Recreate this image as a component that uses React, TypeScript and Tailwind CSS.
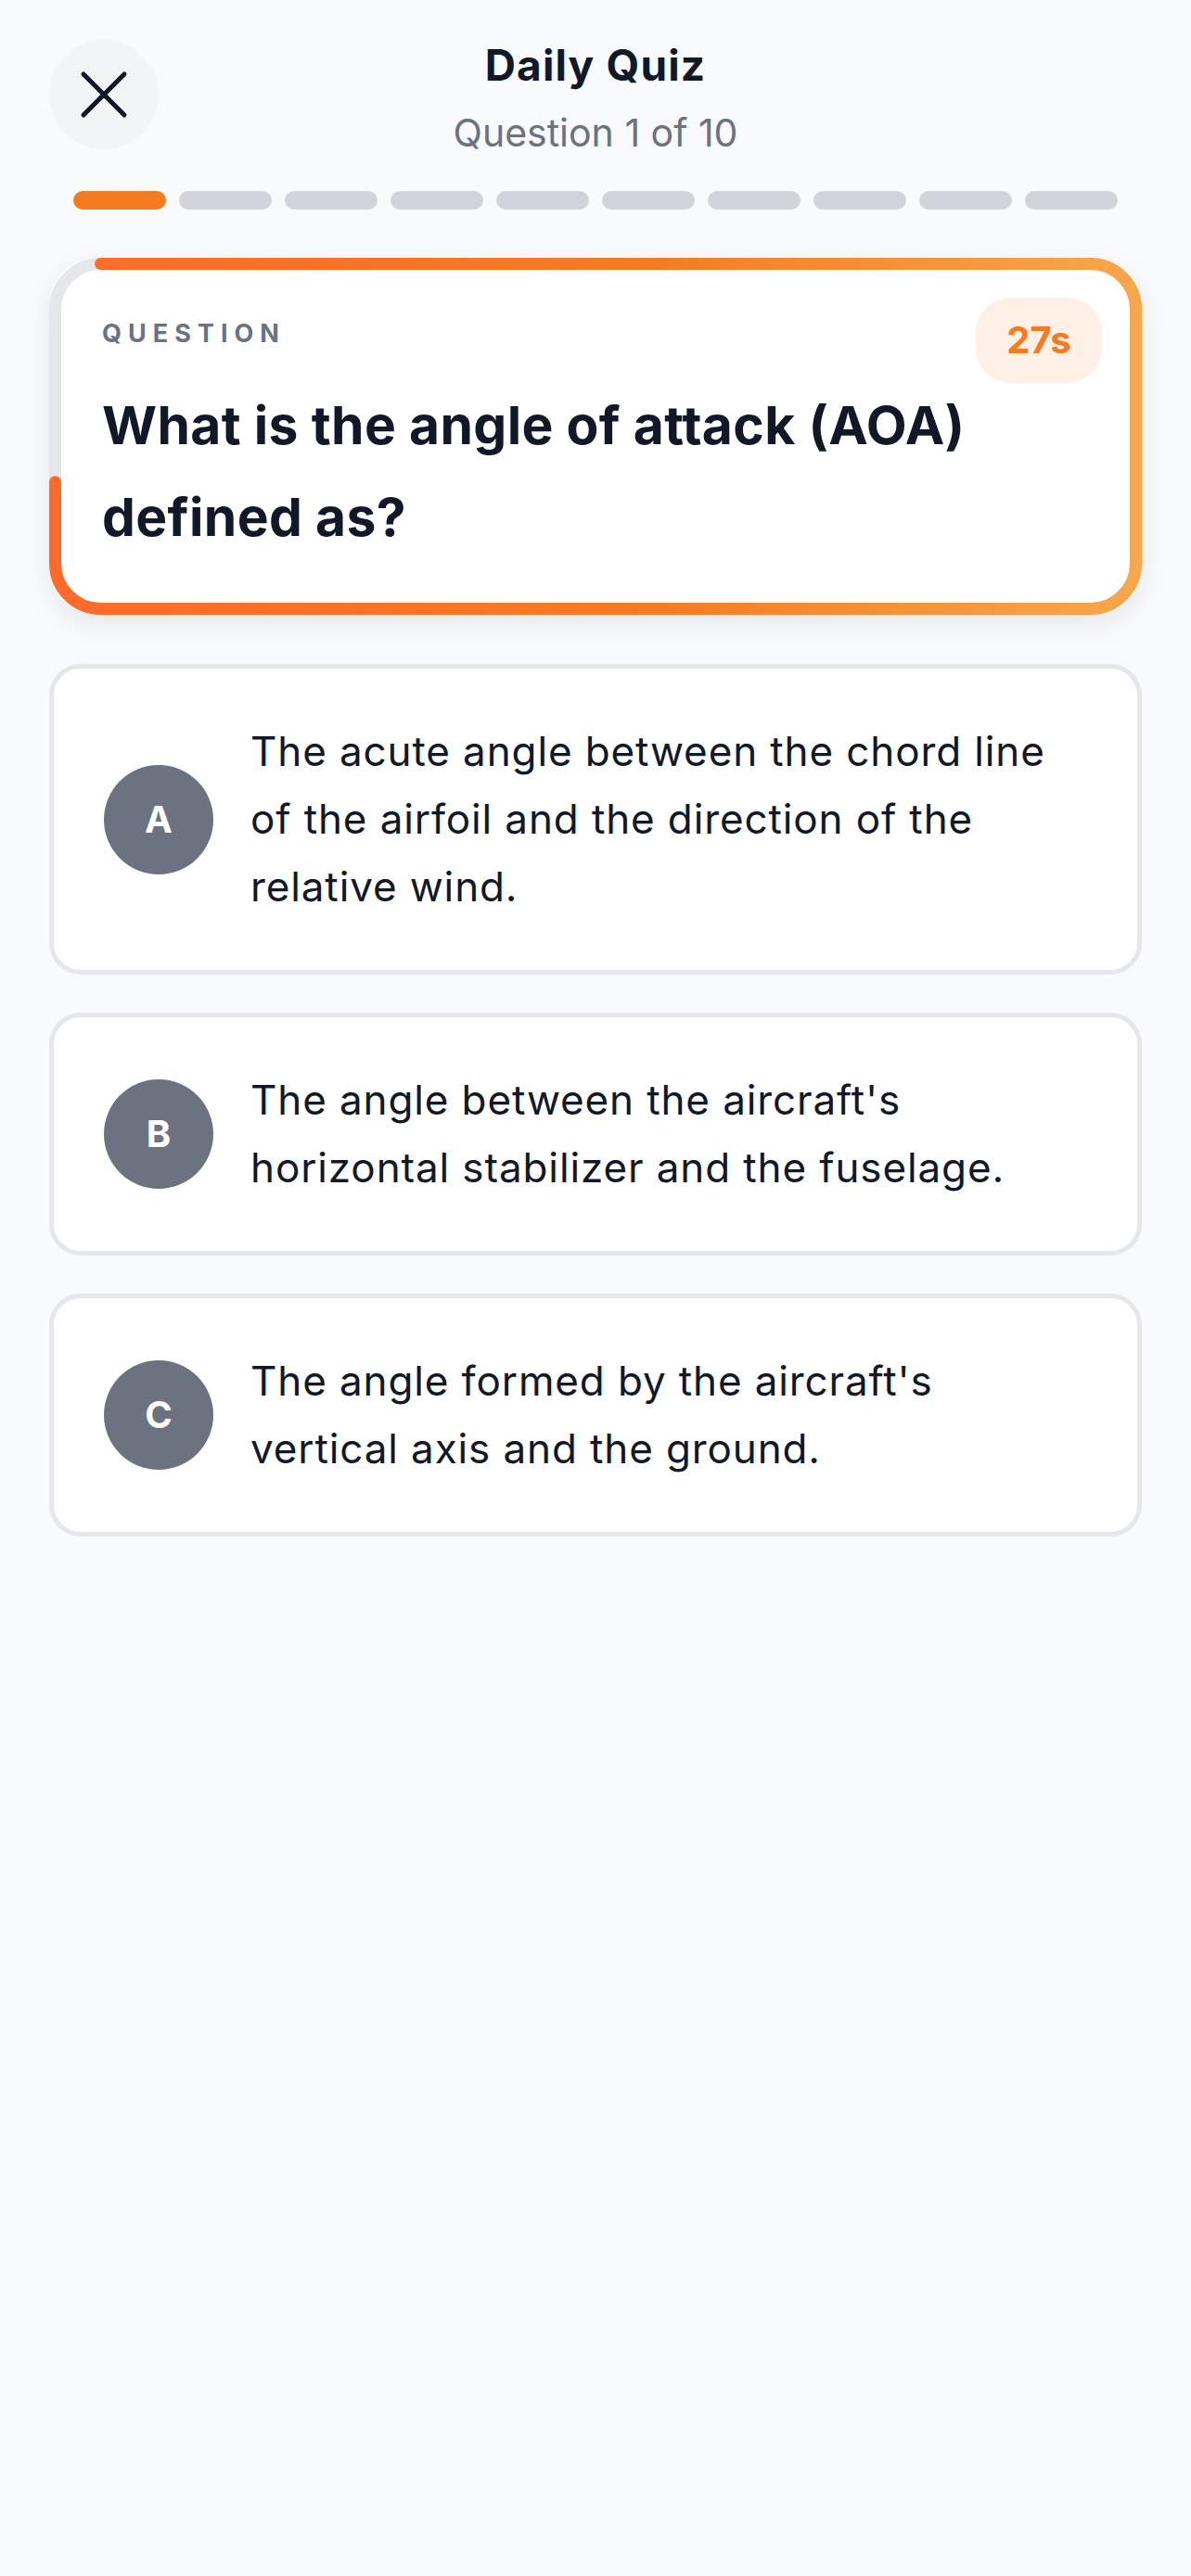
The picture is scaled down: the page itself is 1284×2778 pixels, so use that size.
import React from 'react';

const options = [
  { key: 'A', text: 'The acute angle between the chord line of the airfoil and the direction of the relative wind.' },
  { key: 'B', text: "The angle between the aircraft's horizontal stabilizer and the fuselage." },
  { key: 'C', text: "The angle formed by the aircraft's vertical axis and the ground." },
];

const TOTAL = 10;
const CURRENT = 1;

// timer ring drawn around the question card
const TimerRing = ({ progress }: { progress: number }) => {
  return (
    <svg
      className="pointer-events-none absolute inset-0"
      width={1178}
      height={385}
      viewBox="0 0 1178 385"
    >
      <defs>
        <linearGradient id="ring" x1="0" y1="0" x2="1178" y2="0" gradientUnits="userSpaceOnUse">
          <stop offset="0" stopColor="#ff6a2b" />
          <stop offset="0.55" stopColor="#f47c22" />
          <stop offset="1" stopColor="#f8a74c" />
        </linearGradient>
      </defs>
      <rect x={6.5} y={6.5} width={1165} height={372} rx={49} fill="none" stroke="#e5e7eb" strokeWidth={13} />
      <rect
        x={6.5}
        y={6.5}
        width={1165}
        height={372}
        rx={49}
        fill="none"
        stroke="url(#ring)"
        strokeWidth={13}
        strokeLinecap="round"
        pathLength={100}
        strokeDasharray={`${progress} 100`}
      />
    </svg>
  );
};

export default function App() {
  return (
    <div className="min-h-screen bg-[#f9fafb] px-[53px] pt-[43px] font-[Inter,sans-serif] text-[#111827]">
      {/* Header */}
      <div className="grid grid-cols-[118px_1fr_118px] items-start">
        <button className="flex h-[118px] w-[118px] items-center justify-center rounded-full bg-[#f3f4f6]">
          <svg width="56" height="56" viewBox="0 0 56 56" fill="none" stroke="#111827" strokeWidth="5" strokeLinecap="round">
            <line x1="6" y1="6" x2="50" y2="50" />
            <line x1="50" y1="6" x2="6" y2="50" />
          </svg>
        </button>
        <div className="flex flex-col items-center pt-[1px]">
          <h1 className="text-[46px] leading-[52px] font-bold tracking-[0.025em]">Daily Quiz</h1>
          <p className="mt-[21px] text-[41px] leading-[52px] text-[#6b7280]">
            Question {CURRENT} of {TOTAL}
          </p>
        </div>
        <div />
      </div>

      {/* Progress */}
      <div className="mx-[26px] mt-[37px] flex gap-[14px]">
        {Array.from({ length: TOTAL }).map((_, i) => (
          <div
            key={i}
            className={i < CURRENT ? 'h-[20px] flex-1 rounded-full bg-[#f47b20]' : 'h-[20px] flex-1 rounded-full bg-[#d1d5db]'}
          />
        ))}
      </div>

      {/* Question card */}
      <div className="relative mt-[52px] h-[385px] rounded-[52px] bg-white pt-[66px] pr-[43px] pl-[57px] shadow-[0_10px_28px_rgba(17,24,39,0.08)]">
        <TimerRing progress={91.2} />
        <div className="absolute top-[43px] right-[43px] flex h-[92px] w-[136px] items-center justify-center rounded-[38px] bg-[#fff0e6]">
          <span className="text-[40px] font-bold text-[#f47b20]">27s</span>
        </div>
        <div className="text-[27px] leading-[32px] font-bold tracking-[0.26em] text-[#6b7280]">QUESTION</div>
        <h2 className="mt-[33px] text-[57px] leading-[99px] font-bold tracking-[0.006em]">
          What is the angle of attack (AOA) defined as?
        </h2>
      </div>

      {/* Options */}
      <div className="mt-[53px] flex flex-col gap-[41px]">
        {options.map((o) => (
          <button
            key={o.key}
            className="flex items-center gap-[40px] rounded-[34px] border-[5px] border-[#e5e7eb] bg-white px-[54px] py-[53px] text-left"
          >
            <span className="flex h-[118px] w-[118px] shrink-0 items-center justify-center rounded-full bg-[#6b7280] text-[40px] font-bold text-white">
              {o.key}
            </span>
            <span className="text-[44px] leading-[73px] tracking-[0.02em] text-[#111827]">{o.text}</span>
          </button>
        ))}
      </div>
    </div>
  );
}
